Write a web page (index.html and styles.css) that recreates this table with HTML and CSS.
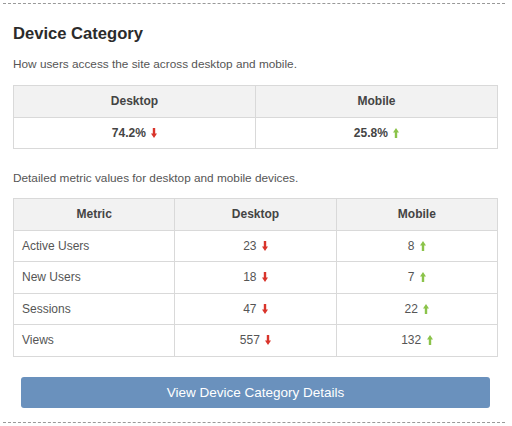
FILE: index.html
```html
<!DOCTYPE html>
<html lang="en">
<head>
    <meta charset="UTF-8">
    <title>Device Category</title>
    <link rel="stylesheet" href="styles.css">
</head>
<body>
    <div class="panel">
        <h2 class="panel-title">Device Category</h2>
        <p class="panel-desc">How users access the site across desktop and mobile.</p>

        <table class="data-table share-table">
            <thead>
                <tr>
                    <th>Desktop</th>
                    <th>Mobile</th>
                </tr>
            </thead>
            <tbody>
                <tr>
                    <td class="bold">74.2% <svg class="arrow down" viewBox="0 0 6 10"><path d="M1.8 0h2.4v5.5h1.8L3 10 0 5.5h1.8z"/></svg></td>
                    <td class="bold">25.8% <svg class="arrow up" viewBox="0 0 6 10"><path d="M1.8 10h2.4V4.5h1.8L3 0 0 4.5h1.8z"/></svg></td>
                </tr>
            </tbody>
        </table>

        <p class="panel-desc second">Detailed metric values for desktop and mobile devices.</p>

        <table class="data-table metric-table">
            <thead>
                <tr>
                    <th>Metric</th>
                    <th>Desktop</th>
                    <th>Mobile</th>
                </tr>
            </thead>
            <tbody id="metric-body">
                <!-- filas generadas -->
            </tbody>
        </table>

        <button class="btn-details">View Device Category Details</button>
    </div>

    <script>
        const metrics = [
            { name: 'Active Users', desktop: 23, mobile: 8 },
            { name: 'New Users', desktop: 18, mobile: 7 },
            { name: 'Sessions', desktop: 47, mobile: 22 },
            { name: 'Views', desktop: 557, mobile: 132 }
        ];

        const down = '<svg class="arrow down" viewBox="0 0 6 10"><path d="M1.8 0h2.4v5.5h1.8L3 10 0 5.5h1.8z"/></svg>';
        const up = '<svg class="arrow up" viewBox="0 0 6 10"><path d="M1.8 10h2.4V4.5h1.8L3 0 0 4.5h1.8z"/></svg>';

        const body = document.getElementById('metric-body');
        metrics.forEach(m => {
            const tr = document.createElement('tr');
            tr.innerHTML = `
                <td class="name">${m.name}</td>
                <td>${m.desktop} ${down}</td>
                <td>${m.mobile} ${up}</td>
            `;
            body.appendChild(tr);
        });
    </script>
</body>
</html>
```

FILE: styles.css
```css
/* General */
body {
    font-family: 'Liberation Sans', Arial, sans-serif;
    margin: 0;
    padding: 3px 7px 0 3px;
    background-color: #fff;
    color: #333;
}

.panel {
    border-top: 1px dashed #999;
    border-bottom: 1px dashed #999;
    padding: 20px 7px 14px 10px;
}

.panel-title {
    font-size: 16.6px;
    font-weight: bold;
    color: #2b2b2b;
    margin: 0 0 12px 0;
    line-height: 20px;
}

.panel-desc {
    font-size: 11.8px;
    color: #555;
    margin: 0 0 13px 0;
    line-height: 16px;
}

.panel-desc.second {
    margin-top: 21px;
    margin-bottom: 12px;
}

/* Tables */
.data-table {
    width: 100%;
    border-collapse: collapse;
    font-size: 12px;
    table-layout: fixed;
}

.data-table th,
.data-table td {
    border: 1px solid #d9d9d9;
    height: 30.5px;
    padding: 0 8px;
    text-align: center;
    color: #555;
}

.data-table th {
    background-color: #f2f2f2;
    font-weight: bold;
    color: #444;
}

.data-table td.bold {
    font-weight: bold;
    color: #444;
}

.data-table td.name {
    text-align: left;
}

.arrow {
    width: 6px;
    height: 10px;
    margin-left: 2px;
    vertical-align: -1px;
}

.arrow.down {
    fill: #d9342b;
}

.arrow.up {
    fill: #8bc34a;
}

/* Button */
.btn-details {
    display: block;
    width: calc(100% - 16px);
    margin: 20px auto 0 auto;
    height: 31px;
    background-color: #6a91bd;
    color: #fff;
    border: none;
    border-radius: 3px;
    font-family: 'Liberation Sans', Arial, sans-serif;
    font-size: 13.5px;
    cursor: pointer;
}
```
